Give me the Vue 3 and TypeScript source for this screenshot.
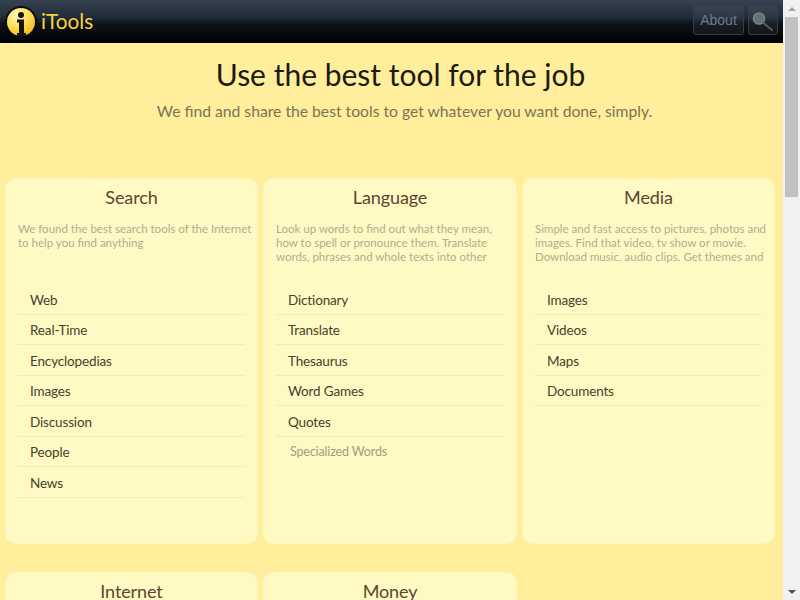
<script setup lang="ts">
interface Card { title: string; desc: string; items: string[]; more?: string }
const cards: Card[] = [
  { title: 'Search', desc: 'We found the best search tools of the Internet to help you find anything', items: ['Web', 'Real-Time', 'Encyclopedias', 'Images', 'Discussion', 'People', 'News'] },
  { title: 'Language', desc: 'Look up words to find out what they mean, how to spell or pronounce them. Translate words, phrases and whole texts into other', items: ['Dictionary', 'Translate', 'Thesaurus', 'Word Games', 'Quotes'], more: 'Specialized Words' },
  { title: 'Media', desc: 'Simple and fast access to pictures, photos and images. Find that video, tv show or movie. Download music, audio clips. Get themes and', items: ['Images', 'Videos', 'Maps', 'Documents'] },
  { title: 'Internet', desc: '', items: [] },
  { title: 'Money', desc: '', items: [] }
]
</script>

<template>
  <div class="window">
    <div class="page">
      <header class="bar">
        <div class="brand">
          <svg class="logo" width="32" height="32" viewBox="0 0 32 32">
            <defs>
              <radialGradient id="lg" cx="0.35" cy="0.25" r="0.85">
                <stop offset="0" stop-color="#fff8c0" />
                <stop offset="0.5" stop-color="#fddf5a" />
                <stop offset="1" stop-color="#f4b313" />
              </radialGradient>
            </defs>
            <circle cx="16" cy="16" r="16" fill="#0b0b08" />
            <circle cx="16" cy="16" r="14" fill="url(#lg)" />
            <circle cx="16" cy="9" r="3" fill="#1a1408" />
            <path d="M12 13.500h7v13.500h2v3h-9v-3h2v-10.500h-2z" fill="#1a1408" />
          </svg>
          <span class="name">iTools</span>
        </div>
        <nav class="actions">
          <a class="btn about">About</a>
          <a class="btn lens">
            <svg width="28" height="28" viewBox="0 0 28 28">
              <circle cx="10" cy="12.500" r="5.600" fill="#5d7375" stroke="#7c8786" stroke-width="1.400" />
              <path d="M14.500 17L23 24" stroke="#5b5d5a" stroke-width="2" stroke-linecap="round" />
            </svg>
          </a>
        </nav>
      </header>

      <main class="content">
        <section class="hero">
          <h1>Use the best tool for the job</h1>
          <p>We find and share the best tools to get whatever you want done, simply.</p>
        </section>
        <div class="grid">
          <article v-for="card in cards" :key="card.title" class="card">
            <h2>{{ card.title }}</h2>
            <p class="desc">{{ card.desc }}</p>
            <ul>
              <li v-for="item in card.items" :key="item">{{ item }}</li>
            </ul>
            <div v-if="card.more" class="more">{{ card.more }}</div>
          </article>
        </div>
      </main>
    </div>

    <aside class="scrollbar">
      <div class="arrow"><span class="up"></span></div>
      <div class="track"><div class="thumb"></div></div>
      <div class="arrow"><span class="down"></span></div>
    </aside>
  </div>
</template>

<style>
html, body { margin: 0; overflow: hidden; }
</style>

<style scoped>
.window {
  display: flex;
  width: 800px;
  height: 600px;
  overflow: hidden;
  font-family: Lato, "Open Sans", sans-serif;
  background: #ffee9c;
}
.page {
  flex: 1;
  min-width: 0;
  height: 600px;
  overflow: hidden;
  background: #ffee9c;
}
.bar {
  height: 43px;
  box-sizing: border-box;
  display: flex;
  align-items: center;
  justify-content: space-between;
  padding: 0 5px;
  background: linear-gradient(#364152 0, #222c39 40%, #0d131a 55%, #000 100%);
}
.brand { display: flex; align-items: center; gap: 4px; }
.logo { display: block; }
.name { font-size: 20.800px; color: #fbd23f; padding-bottom: 3px; }
.actions { display: flex; gap: 4px; margin-top: -4px; }
.btn {
  box-sizing: border-box;
  height: 30px;
  display: flex;
  align-items: center;
  justify-content: center;
  border: 1px solid #333c48;
  border-radius: 3px;
  background: rgba(255, 255, 255, 0.05);
  color: #6f7b88;
  font-family: "Liberation Sans", sans-serif;
  font-size: 14px;
}
.about { width: 51px; }
.lens { width: 30px; }
.hero { text-align: center; padding: 11px 0 0 18px; height: 135px; box-sizing: border-box; }
h1 {
  margin: 0;
  font-size: 30px;
  line-height: 40px;
  font-weight: 400;
  color: #1d1a10;
}
.hero p {
  margin: 6px 0 0;
  padding-left: 8px;
  font-size: 15.700px;
  line-height: 22px;
  color: #7b7354;
}
.grid {
  display: grid;
  grid-template-columns: 253px 254px 253px;
  column-gap: 5px;
  row-gap: 28px;
  padding: 0 8px 0 5px;
}
.card {
  height: 366px;
  box-sizing: border-box;
  padding: 0 13px;
  background: #fffac3;
  border-radius: 10px;
  box-shadow: inset 0 0 2px rgba(250, 228, 150, 0.7);
}
h2 {
  margin: 0;
  padding-top: 7px;
  font-size: 18px;
  line-height: 24px;
  font-weight: 400;
  letter-spacing: -0.100px;
  text-align: center;
  color: #5c4632;
}
.desc {
  margin: 13px -10px 0 0;
  height: 42px;
  overflow: hidden;
  font-size: 11.500px;
  line-height: 14px;
  color: #b3ac92;
}
ul { list-style: none; margin: 20px 0 0; padding: 0; }
li {
  height: 30.500px;
  box-sizing: border-box;
  padding: 6.500px 0 0 12px;
  font-size: 13.500px;
  letter-spacing: -0.150px;
  line-height: 18px;
  color: #46422e;
  border-bottom: 1px solid #f4ecb4;
}
.more {
  padding: 6.500px 0 0 14px;
  font-size: 12.500px;
  letter-spacing: -0.150px;
  line-height: 18px;
  color: #a39c80;
}
.scrollbar {
  width: 17px;
  height: 600px;
  display: flex;
  flex-direction: column;
  background: #f1f1f1;
}
.arrow { height: 17px; display: flex; align-items: center; justify-content: center; }
.up, .down { width: 0; height: 0; border-left: 4px solid transparent; border-right: 4px solid transparent; }
.up { border-bottom: 4px solid #a3a3a3; }
.down { border-top: 4px solid #505050; }
.track { flex: 1; padding: 0 2px; }
.thumb { height: 180px; background: #c1c1c1; }
</style>
